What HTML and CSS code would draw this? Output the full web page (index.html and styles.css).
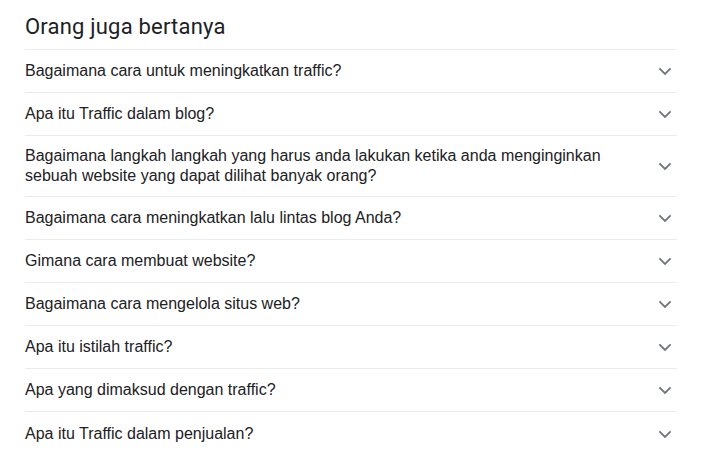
FILE: index.html
```html
<!DOCTYPE html>
<html lang="id">
<head>
    <meta charset="UTF-8">
    <meta name="viewport" content="width=device-width, initial-scale=1.0">
    <title>Orang juga bertanya</title>
    <link rel="stylesheet" href="styles.css">
</head>
<body>
    <div class="container">
        <div class="header">
            <h2>Orang juga bertanya</h2>
        </div>

        <div class="question-list">
            <div class="question-item">
                <span class="question-text">Bagaimana cara untuk meningkatkan traffic?</span>
                <span class="chevron"><svg width="24" height="24" viewBox="0 0 24 24"><path d="M6.4 9.4 12 15l5.6-5.6" fill="none" stroke="#70757a" stroke-width="1.8"/></svg></span>
            </div>
            <div class="question-item">
                <span class="question-text">Apa itu Traffic dalam blog?</span>
                <span class="chevron"><svg width="24" height="24" viewBox="0 0 24 24"><path d="M6.4 9.4 12 15l5.6-5.6" fill="none" stroke="#70757a" stroke-width="1.8"/></svg></span>
            </div>
            <div class="question-item">
                <span class="question-text">Bagaimana langkah langkah yang harus anda lakukan ketika anda menginginkan sebuah website yang dapat dilihat banyak orang?</span>
                <span class="chevron"><svg width="24" height="24" viewBox="0 0 24 24"><path d="M6.4 9.4 12 15l5.6-5.6" fill="none" stroke="#70757a" stroke-width="1.8"/></svg></span>
            </div>
            <div class="question-item">
                <span class="question-text">Bagaimana cara meningkatkan lalu lintas blog Anda?</span>
                <span class="chevron"><svg width="24" height="24" viewBox="0 0 24 24"><path d="M6.4 9.4 12 15l5.6-5.6" fill="none" stroke="#70757a" stroke-width="1.8"/></svg></span>
            </div>
            <div class="question-item">
                <span class="question-text">Gimana cara membuat website?</span>
                <span class="chevron"><svg width="24" height="24" viewBox="0 0 24 24"><path d="M6.4 9.4 12 15l5.6-5.6" fill="none" stroke="#70757a" stroke-width="1.8"/></svg></span>
            </div>
            <div class="question-item">
                <span class="question-text">Bagaimana cara mengelola situs web?</span>
                <span class="chevron"><svg width="24" height="24" viewBox="0 0 24 24"><path d="M6.4 9.4 12 15l5.6-5.6" fill="none" stroke="#70757a" stroke-width="1.8"/></svg></span>
            </div>
            <div class="question-item">
                <span class="question-text">Apa itu istilah traffic?</span>
                <span class="chevron"><svg width="24" height="24" viewBox="0 0 24 24"><path d="M6.4 9.4 12 15l5.6-5.6" fill="none" stroke="#70757a" stroke-width="1.8"/></svg></span>
            </div>
            <div class="question-item">
                <span class="question-text">Apa yang dimaksud dengan traffic?</span>
                <span class="chevron"><svg width="24" height="24" viewBox="0 0 24 24"><path d="M6.4 9.4 12 15l5.6-5.6" fill="none" stroke="#70757a" stroke-width="1.8"/></svg></span>
            </div>
            <div class="question-item">
                <span class="question-text">Apa itu Traffic dalam penjualan?</span>
                <span class="chevron"><svg width="24" height="24" viewBox="0 0 24 24"><path d="M6.4 9.4 12 15l5.6-5.6" fill="none" stroke="#70757a" stroke-width="1.8"/></svg></span>
            </div>
        </div>
    </div>
</body>
</html>
```

FILE: styles.css
```css
body {
    font-family: 'Liberation Sans', Arial, sans-serif;
    margin: 0;
    padding: 0 29px 0 25px;
    background-color: #fff;
    color: #202124;
}
.container {
    max-width: 652px;
}
.header {
    height: 49px;
    display: flex;
    align-items: center;
}
.header h2 {
    margin: 0;
    font-family: Roboto, 'Liberation Sans', sans-serif;
    font-size: 22px;
    letter-spacing: 0.2px;
    font-weight: 400;
    line-height: 28px;
    padding-top: 4px;
}
.question-list {
    border-top: 1px solid #ebebeb;
}
.question-item {
    display: flex;
    align-items: center;
    justify-content: space-between;
    gap: 20px;
    min-height: 43px;
    box-sizing: border-box;
    padding: 10px 0;
    border-bottom: 1px solid #ebebeb;
    font-size: 16px;
    line-height: 20px;
}
.question-item:last-child {
    border-bottom: none;
}
.question-text {
    flex: 1;
}
.chevron {
    width: 24px;
    height: 20px;
    display: flex;
    align-items: center;
    justify-content: center;
}
.chevron svg {
    display: block;
}
```
